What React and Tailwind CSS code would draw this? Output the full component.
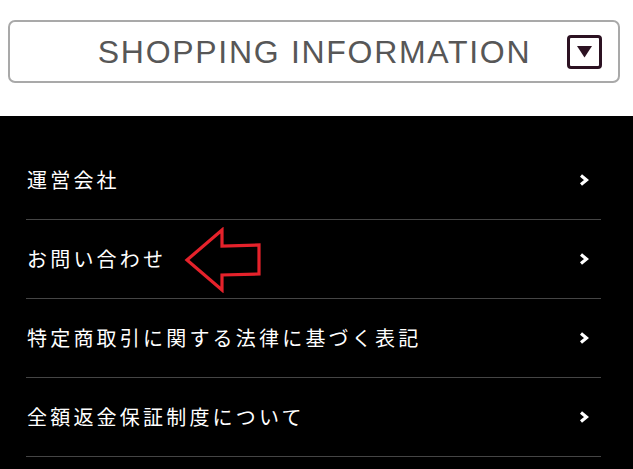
const links = [
  '運営会社',
  'お問い合わせ',
  '特定商取引に関する法律に基づく表記',
  '全額返金保証制度について',
]

function Chevron() {
  return (
    <svg width="10" height="14" viewBox="0 0 10 14" className="shrink-0">
      <polyline points="2,2.5 7.5,7 2,11.5" fill="none" stroke="#fff" strokeWidth="3.2" strokeLinejoin="miter" />
    </svg>
  )
}

function RedArrow() {
  return (
    <svg
      width="78"
      height="66"
      viewBox="0 0 78 66"
      className="absolute left-[158px] top-[7px] pointer-events-none"
    >
      <polygon
        points="3,33 38,3 38,19 75,18 75,47 38,48 38,63"
        fill="none"
        stroke="#e5222b"
        strokeWidth="3.2"
        strokeLinejoin="miter"
      />
    </svg>
  )
}

export default function App() {
  return (
    <div className="w-[633px] h-[469px] overflow-hidden bg-white font-['Noto_Sans_CJK_JP','Noto_Sans',sans-serif]">
      <div className="h-[116px] pt-[20px] pl-[8px] pr-[13px]">
        <div className="relative h-[63px] border-2 border-[#a9a9a9] rounded-[7px] flex items-center justify-center">
          <span className="font-['Liberation_Sans',Arial,sans-serif] text-[32px] leading-none tracking-[1.7px] text-[#575757] pl-[1px]">
            SHOPPING INFORMATION
          </span>
          <div className="absolute right-[16px] top-[13px] w-[35px] h-[34px] border-[3px] border-[#2c1222] rounded-[4px] flex items-center justify-center">
            <svg width="15" height="12" viewBox="0 0 15 12">
              <polygon points="0,0 15,0 7.5,11.5" fill="#2c1222" />
            </svg>
          </div>
        </div>
      </div>

      <div className="bg-black h-[353px] pt-[25px] pl-[26px] pr-[32px]">
        {links.map((label, i) => (
          <div
            key={label}
            className="relative h-[79px] border-b border-[#454545] flex items-center justify-between pl-[1px] pr-[12px]"
          >
            <span className="text-white text-[20px] leading-none tracking-[0.16em]">{label}</span>
            <Chevron />
            {i === 1 && <RedArrow />}
          </div>
        ))}
      </div>
    </div>
  )
}
